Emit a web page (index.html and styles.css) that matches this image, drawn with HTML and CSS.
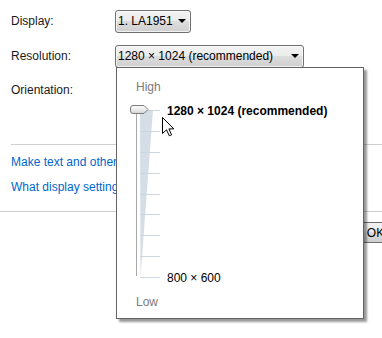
FILE: index.html
```html
<!DOCTYPE html>
<html lang="en">
<head>
    <meta charset="UTF-8">
    <meta name="viewport" content="width=device-width, initial-scale=1.0">
    <title>Screen Resolution</title>
    <link rel="stylesheet" href="styles.css">
</head>
<body>
    <div class="settings">
        <div class="field">
            <span class="label">Display:</span>
            <div class="combo combo-display">
                <span>1. LA1951</span>
                <span class="arrow"></span>
            </div>
        </div>
        <div class="field">
            <span class="label">Resolution:</span>
            <div class="combo combo-resolution">
                <span>1280 × 1024 (recommended)</span>
                <span class="arrow"></span>
            </div>
        </div>
        <div class="field">
            <span class="label">Orientation:</span>
        </div>

        <hr class="divider">

        <div class="links">
            <a href="#">Make text and other items larger or smaller</a>
            <a href="#">What display settings should I choose?</a>
        </div>
    </div>

    <hr class="divider divider-full">

    <div class="footer">
        <button class="btn">OK</button>
    </div>

    <!-- resolution dropdown -->
    <div class="popup">
        <div class="end-label high">High</div>
        <div class="scale">
            <svg class="slider" width="37" height="184" viewBox="0 0 37 184">
                <defs>
                    <linearGradient id="thumbFill" x1="0" y1="0" x2="0" y2="1">
                        <stop offset="0" stop-color="#fbfbfb"/>
                        <stop offset="0.5" stop-color="#ececec"/>
                        <stop offset="1" stop-color="#d2d2d2"/>
                    </linearGradient>
                </defs>
                <polygon points="10,8 23,8 10.5,175" fill="#d5dee6"/>
                <g stroke="#cdd6de" stroke-width="1">
                    <line x1="10" y1="8.5" x2="30" y2="8.5"/>
                    <line x1="10" y1="29.5" x2="30" y2="29.5"/>
                    <line x1="10" y1="50.5" x2="30" y2="50.5"/>
                    <line x1="10" y1="71.5" x2="30" y2="71.5"/>
                    <line x1="10" y1="92.5" x2="30" y2="92.5"/>
                    <line x1="10" y1="112.5" x2="30" y2="112.5"/>
                    <line x1="10" y1="133.5" x2="30" y2="133.5"/>
                    <line x1="10" y1="154.5" x2="30" y2="154.5"/>
                    <line x1="10" y1="175.5" x2="30" y2="175.5"/>
                </g>
                <line x1="6.5" y1="8" x2="6.5" y2="174" stroke="#a8a8a8" stroke-width="1"/>
                <path d="M3 3.5 H14 L18 7.5 L14 11.5 H3 Q0.5 11.5 0.5 9 V6 Q0.5 3.5 3 3.5 Z" fill="url(#thumbFill)" stroke="#7c7c7c" stroke-width="1"/>
            </svg>
            <div class="scale-labels">
                <span class="current">1280 × 1024 (recommended)</span>
                <span>800 × 600</span>
            </div>
        </div>
        <div class="end-label low">Low</div>
    </div>

    <svg class="cursor" width="13" height="20" viewBox="0 0 13 20">
        <path d="M0.5 0.5 L0.5 16.5 L4.5 12.8 L7.3 18.8 L9.6 17.8 L6.9 11.9 L11.8 11.9 Z" fill="#fff" stroke="#000" stroke-width="1" stroke-linejoin="miter"/>
    </svg>
</body>
</html>
```

FILE: styles.css
```css
body {
  font-family: "Liberation Sans", Arial, sans-serif;
  font-size: 12px;
  color: #1a1a1a;
  margin: 0;
  padding: 0;
  background-color: #fff;
  overflow: hidden;
  position: relative;
  height: 338px;
}

.settings {
  padding: 10px 0 0 11px;
}

.field {
  display: flex;
  align-items: center;
  height: 22px;
  margin-bottom: 13px;
}

.field + .field {
  margin-bottom: 12px;
}

.label {
  width: 104px;
}

.combo {
  display: flex;
  justify-content: space-between;
  align-items: center;
  box-sizing: border-box;
  height: 23px;
  padding: 0 4px 0 2px;
  border: 1px solid #707070;
  border-radius: 3px;
  background: linear-gradient(#f2f2f2 0%, #ebebeb 50%, #dddddd 50%, #cfcfcf 100%);
  box-shadow: inset 0 0 0 1px rgba(255, 255, 255, 0.7);
  color: #000;
}

.combo-display {
  width: 76px;
}

.combo-resolution {
  width: 189px;
}

.arrow {
  width: 0;
  height: 0;
  border-left: 4px solid transparent;
  border-right: 4px solid transparent;
  border-top: 4px solid #000;
}

.divider {
  border: none;
  border-top: 1px solid #cfcfcf;
  margin: 43px 0 0 0;
}

.links {
  display: flex;
  flex-direction: column;
  padding-top: 5px;
  line-height: 25px;
  white-space: nowrap;
}

.links a {
  color: #0066cc;
  text-decoration: none;
}

.divider-full {
  margin-top: 11px;
}

.footer {
  padding: 10px 0 0 338px;
}

.btn {
  width: 75px;
  height: 21px;
  font-family: inherit;
  font-size: 12px;
  color: #000;
  border: 1px solid #707070;
  border-radius: 3px;
  background: linear-gradient(#f2f2f2 0%, #ebebeb 50%, #dddddd 50%, #cfcfcf 100%);
  padding: 0;
}

.popup {
  position: absolute;
  left: 116px;
  top: 67px;
  width: 233px;
  height: 250px;
  border: 1px solid #646464;
  background-color: #fff;
  box-shadow: 3px 3px 2px rgba(0, 0, 0, 0.4);
  padding-left: 13px;
  box-sizing: content-box;
}

.end-label {
  color: #7a7a7a;
  line-height: 16px;
  margin-left: 6px;
}

.high {
  margin-top: 11px;
}

.scale {
  display: flex;
  margin-top: 7px;
}

.slider {
  display: block;
  flex-shrink: 0;
}

.scale-labels {
  display: flex;
  flex-direction: column;
  justify-content: space-between;
  height: 183px;
  padding-top: 1px;
  line-height: 16px;
  color: #000;
  white-space: nowrap;
}

.current {
  font-weight: bold;
}

.low {
  margin-top: 8px;
}

.cursor {
  position: absolute;
  left: 162px;
  top: 117px;
}
```
